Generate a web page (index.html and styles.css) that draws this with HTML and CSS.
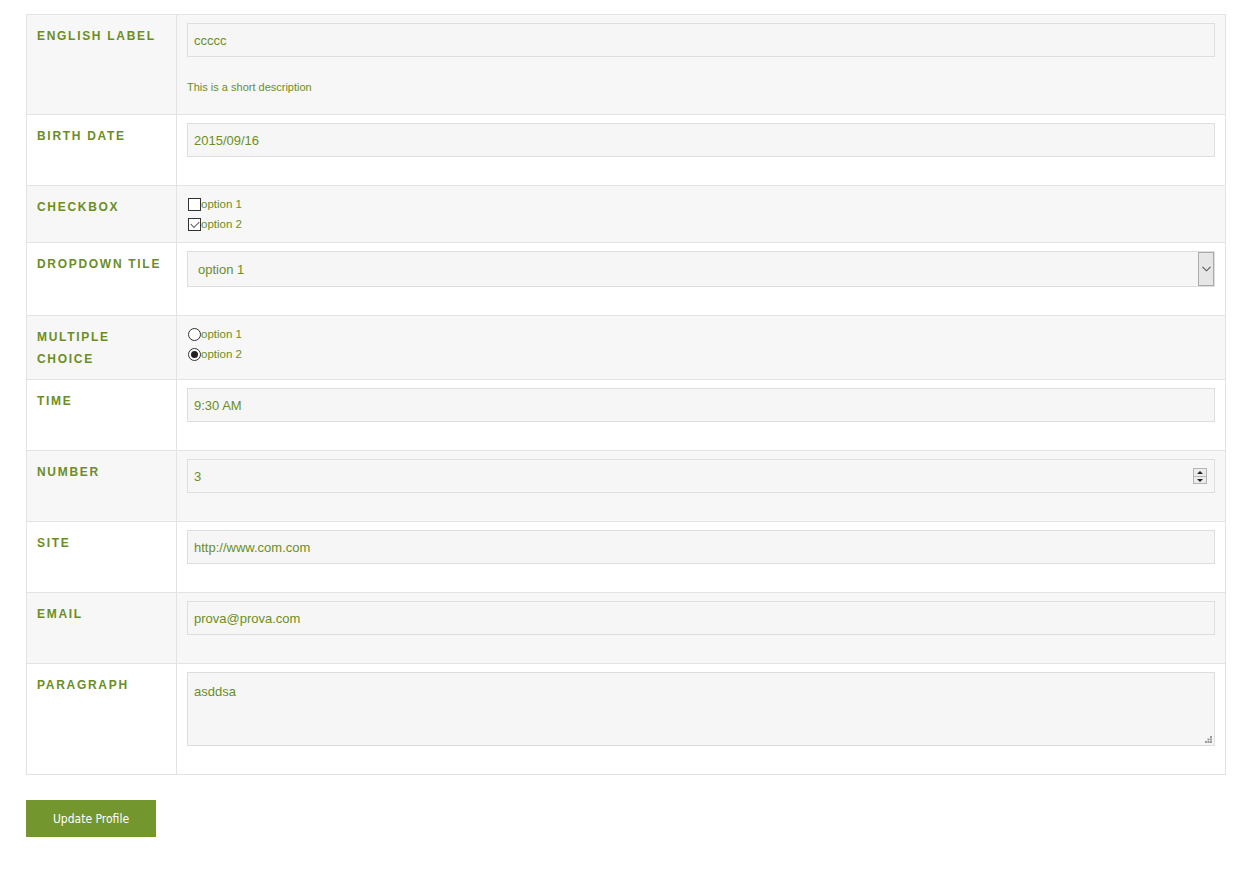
FILE: index.html
```html
<!DOCTYPE html>
<html lang="en">

<head>
    <meta charset="UTF-8">
    <meta name="viewport" content="width=device-width, initial-scale=1.0">
    <title>Edit profile</title>
    <link rel="stylesheet" href="styles.css">
</head>

<body>
    <form class="page" id="profile">
        <div class="fields">
            <div class="row shade">
                <label class="name" for="english">English label</label>
                <div class="value">
                    <input type="text" id="english" class="box" value="ccccc">
                    <p class="hint">This is a short description</p>
                </div>
            </div>
            <div class="row">
                <label class="name" for="birth">Birth date</label>
                <div class="value">
                    <input type="text" id="birth" class="box" value="2015/09/16">
                </div>
            </div>
            <div class="row shade">
                <span class="name">Checkbox</span>
                <div class="value choices">
                    <label class="opt"><input type="checkbox" class="tick">option 1</label>
                    <label class="opt"><input type="checkbox" class="tick" checked>option 2</label>
                </div>
            </div>
            <div class="row">
                <label class="name" for="tile">Dropdown tile</label>
                <div class="value">
                    <div class="select">
                        <select id="tile" class="box">
                            <option>option 1</option>
                            <option>option 2</option>
                        </select>
                        <span class="arrow">
                            <svg width="9" height="6" viewBox="0 0 9 6"><path d="M0.5 0.8 L4.5 4.8 L8.5 0.8" fill="none" stroke="#555" stroke-width="1.1"/></svg>
                        </span>
                    </div>
                </div>
            </div>
            <div class="row shade">
                <span class="name">Multiple choice</span>
                <div class="value choices">
                    <label class="opt"><input type="radio" name="multi" class="dot">option 1</label>
                    <label class="opt"><input type="radio" name="multi" class="dot" checked>option 2</label>
                </div>
            </div>
            <div class="row">
                <label class="name" for="time">Time</label>
                <div class="value">
                    <input type="text" id="time" class="box" value="9:30 AM">
                </div>
            </div>
            <div class="row shade">
                <label class="name" for="number">Number</label>
                <div class="value">
                    <div class="spin">
                        <input type="number" id="number" class="box" value="3">
                        <span class="spinner">
                            <span class="up"></span>
                            <span class="down"></span>
                        </span>
                    </div>
                </div>
            </div>
            <div class="row">
                <label class="name" for="site">Site</label>
                <div class="value">
                    <input type="text" id="site" class="box" value="http://www.com.com">
                </div>
            </div>
            <div class="row shade">
                <label class="name" for="email">Email</label>
                <div class="value">
                    <input type="text" id="email" class="box" value="prova@prova.com">
                </div>
            </div>
            <div class="row">
                <label class="name" for="para">Paragraph</label>
                <div class="value">
                    <div class="area">
                        <textarea id="para" class="box">asddsa</textarea>
                        <svg class="grip" width="7" height="7" viewBox="0 0 7 7">
                            <rect x="5" y="0" width="2" height="2" fill="#999"/>
                            <rect x="2.5" y="2.5" width="2" height="2" fill="#999"/>
                            <rect x="5" y="2.5" width="2" height="2" fill="#999"/>
                            <rect x="0" y="5" width="2" height="2" fill="#999"/>
                            <rect x="2.5" y="5" width="2" height="2" fill="#999"/>
                            <rect x="5" y="5" width="2" height="2" fill="#999"/>
                        </svg>
                    </div>
                </div>
            </div>
        </div>
        <button type="submit" class="update">Update Profile</button>
    </form>
</body>

</html>
```

FILE: styles.css
```css
* {
    margin: 0;
    padding: 0;
    box-sizing: border-box;
}

body {
    font-family: "Liberation Sans", Arial, Helvetica, sans-serif;
    background-color: #fff;
    color: #6b8e23;
}

.page {
    padding: 14px 0 40px 26px;
}

.fields {
    width: 1200px;
    border: 1px solid #e3e3e3;
}

.row {
    display: grid;
    grid-template-columns: 150px 1fr;
    border-top: 1px solid #e3e3e3;
}

.row:first-child {
    border-top: none;
}

.shade {
    background-color: #f7f7f7;
}

.name {
    padding: 10px 10px 9px;
    border-right: 1px solid #e3e3e3;
    font-size: 12px;
    font-weight: bold;
    line-height: 22px;
    letter-spacing: 1.7px;
    text-transform: uppercase;
    color: #6b8e23;
}

.value {
    padding: 8px 10px 8px;
}

.box {
    display: block;
    width: 100%;
    height: 34px;
    margin-bottom: 20px;
    padding: 0 6px;
    border: 1px solid #dedede;
    background-color: #f6f6f6;
    font-family: "Liberation Sans", Arial, sans-serif;
    font-size: 13px;
    color: #6b8e23;
    outline: none;
}

.hint {
    font-size: 11px;
    line-height: 20px;
    margin-bottom: 9px;
}

/* checkbox / radio lists */
.choices {
    padding-top: 8px;
}

.opt {
    display: flex;
    align-items: center;
    height: 20px;
    font-size: 11.5px;
}

.tick,
.dot {
    appearance: none;
    -webkit-appearance: none;
    width: 13px;
    height: 13px;
    margin: 0 0 0 1px;
    border: 1px solid #333;
    background-color: #fff;
    position: relative;
}

.tick:checked::after {
    content: "";
    position: absolute;
    left: 2px;
    top: 2px;
    width: 7px;
    height: 4px;
    border-left: 1px solid #555;
    border-bottom: 1px solid #555;
    transform: rotate(-45deg);
}

.dot {
    border-radius: 50%;
}

.dot:checked::after {
    content: "";
    position: absolute;
    left: 2px;
    top: 2px;
    width: 7px;
    height: 7px;
    border-radius: 50%;
    background-color: #222;
}

/* dropdown */
.select {
    position: relative;
}

.select .box {
    height: 36px;
    padding-left: 10px;
    appearance: none;
    -webkit-appearance: none;
}

.arrow {
    position: absolute;
    right: 1px;
    top: 1px;
    width: 16px;
    height: 34px;
    border: 1px solid #aaa;
    background-color: #e6e6e6;
    display: flex;
    align-items: center;
    justify-content: center;
}

/* number spinner */
.spin {
    position: relative;
}

.spin .box::-webkit-inner-spin-button,
.spin .box::-webkit-outer-spin-button {
    -webkit-appearance: none;
    margin: 0;
}

.spinner {
    position: absolute;
    right: 8px;
    top: 9px;
    width: 14px;
    height: 16px;
    border: 1px solid #b5b5b5;
    background-color: #ececec;
    display: flex;
    flex-direction: column;
}

.spinner span {
    flex: 1;
    position: relative;
}

.spinner .up {
    border-bottom: 1px solid #b5b5b5;
}

.spinner .up::after,
.spinner .down::after {
    content: "";
    position: absolute;
    left: 3px;
    border-left: 3px solid transparent;
    border-right: 3px solid transparent;
}

.spinner .up::after {
    top: 2px;
    border-bottom: 3px solid #222;
}

.spinner .down::after {
    top: 2px;
    border-top: 3px solid #222;
}

/* paragraph */
.area {
    position: relative;
}

.area .box {
    height: 74px;
    padding: 11px 6px 6px;
    resize: none;
    line-height: 16px;
}

.grip {
    position: absolute;
    right: 3px;
    bottom: 3px;
}

.update {
    margin-top: 25px;
    width: 130px;
    height: 37px;
    border: none;
    background-color: #74962f;
    color: #fff;
    font-family: Tahoma, "DejaVu Sans Condensed", "Liberation Sans", sans-serif;
    font-size: 12px;
    cursor: pointer;
}
```
